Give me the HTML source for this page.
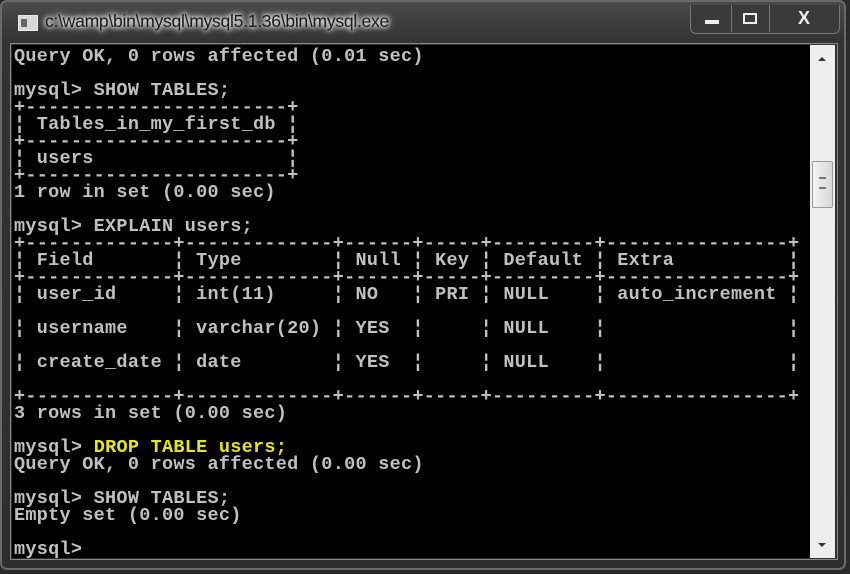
<!DOCTYPE html>
<html><head><meta charset="utf-8"><style>
html,body{margin:0;padding:0;background:#2a2a2a;width:850px;height:574px;overflow:hidden}
.win{position:absolute;left:0;top:0;width:846px;height:570px;background:linear-gradient(#4a4a4a,#333 40px,#2e2e2e);border:2px solid #6a6a6a;border-radius:7px;box-sizing:border-box}
.title{position:absolute;left:43px;top:9px;font:17.6px "Liberation Sans",sans-serif;color:#1a1a1a;text-shadow:0 0 6px #fff,0 0 4px #fff,0 0 8px #ddd;letter-spacing:-0.3px}
.icon{position:absolute;left:16px;top:13px;width:18px;height:14px;background:#d8d8d8;border:1px solid #eee}
.icon:before{content:"";position:absolute;left:2px;top:3px;width:6px;height:8px;background:#666}
.btns{position:absolute;left:688px;top:3px;width:148px;height:28px;border:1px solid #777;border-top:none;border-radius:0 0 6px 6px;background:#3a3a3a}
.b{position:absolute;top:0;height:27px;border-right:1px solid #777}
.con{position:absolute;left:12px;top:45px;width:798px;height:513px;background:#000}
.sb{position:absolute;left:810px;top:45px;width:25px;height:513px;background:#eeeeee}
.thumb{position:absolute;left:2px;top:116px;width:19px;height:45px;background:linear-gradient(90deg,#f4f4f4,#d8d8d8);border:1px solid #999;border-radius:2px}
pre{margin:0;position:absolute;left:14px;top:48px;font:bold 18.5px/17px "Liberation Mono",monospace;color:#c0c0c0;letter-spacing:0.28px}
.y{color:#e8e800}
.frame{position:absolute;left:10px;top:43px;width:828px;height:517px;border:1px solid #888;box-sizing:border-box}
</style></head><body>
<div class="win">
<div class="icon"></div>
<div class="title">c:\wamp\bin\mysql\mysql5.1.36\bin\mysql.exe</div>
<div class="btns">
<div class="b" style="left:0;width:40px"><div style="position:absolute;left:14px;top:15px;width:14px;height:4px;background:#eee"></div></div>
<div class="b" style="left:41px;width:37px"><div style="position:absolute;left:11px;top:8px;width:10px;height:7px;border:2px solid #eee"></div></div>
<div style="position:absolute;left:107px;top:3px;color:#eee;font:bold 18px 'Liberation Sans',sans-serif">X</div>
</div>
</div>
<div class="frame"></div>
<div class="con"></div>
<div class="sb"><div style="position:absolute;left:8px;top:12px;border:4px solid transparent;border-bottom:4px solid #333;border-top:none"></div><div class="thumb"><div style="position:absolute;left:6px;top:15px;width:7px;height:10px;border-top:1px solid #777;border-bottom:1px solid #777;box-shadow:inset 0 3px 0 -2px #777,inset 0 -3px 0 -2px #777"></div></div><div style="position:absolute;left:8px;top:498px;border:4px solid transparent;border-top:4px solid #333;border-bottom:none"></div></div>
<pre>Query OK, 0 rows affected (0.01 sec)

mysql&gt; SHOW TABLES;
+-----------------------+
¦ Tables_in_my_first_db ¦
+-----------------------+
¦ users                 ¦
+-----------------------+
1 row in set (0.00 sec)

mysql&gt; EXPLAIN users;
+-------------+-------------+------+-----+---------+----------------+
¦ Field       ¦ Type        ¦ Null ¦ Key ¦ Default ¦ Extra          ¦
+-------------+-------------+------+-----+---------+----------------+
¦ user_id     ¦ int(11)     ¦ NO   ¦ PRI ¦ NULL    ¦ auto_increment ¦

¦ username    ¦ varchar(20) ¦ YES  ¦     ¦ NULL    ¦                ¦

¦ create_date ¦ date        ¦ YES  ¦     ¦ NULL    ¦                ¦

+-------------+-------------+------+-----+---------+----------------+
3 rows in set (0.00 sec)

mysql&gt; <span class="y">DROP TABLE users;</span>
Query OK, 0 rows affected (0.00 sec)

mysql&gt; SHOW TABLES;
Empty set (0.00 sec)

mysql&gt;</pre>
</body></html>
